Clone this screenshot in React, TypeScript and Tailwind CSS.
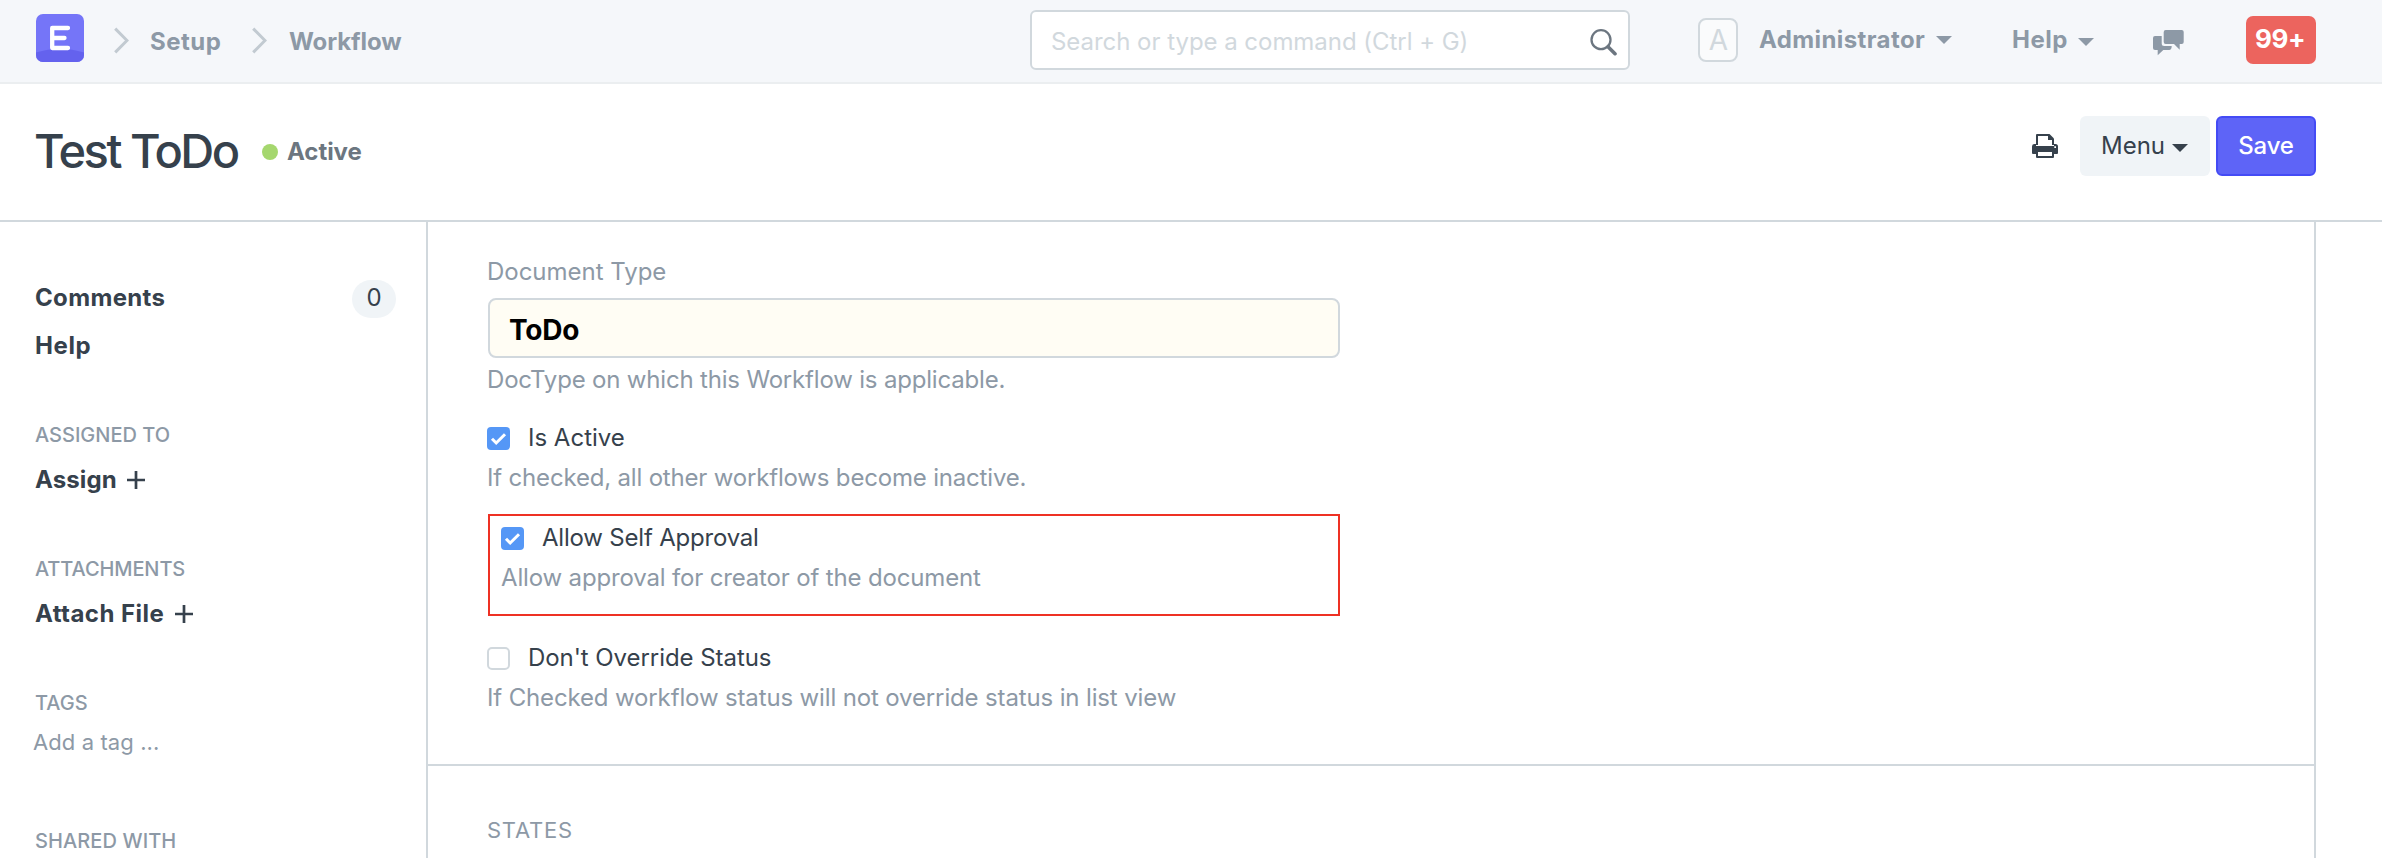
import type { ReactNode } from "react";

function Chevron({ className }: { className: string }) {
  return (
    <svg className={`mt-[27px] h-[27px] w-[15px] shrink-0 ${className}`} viewBox="0 0 15 27" fill="none">
      <path d="M1.200 1.600 13 13.500 1.200 25.400" stroke="#c2cad1" strokeWidth="3" />
    </svg>
  );
}

function Caret({ className }: { className: string }) {
  return (
    <svg className={`h-2 w-4 shrink-0 ${className}`} viewBox="0 0 16 8" fill="currentColor">
      <path d="M0 0h16L8 8z" />
    </svg>
  );
}

function Logo() {
  return (
    <svg className="mt-[14px] ml-9 h-12 w-12 shrink-0 rounded-[7px]" viewBox="0 0 48 48" fill="none">
      <rect width="48" height="48" fill="#7575f8" />
      <path d="M0 38.600Q24 31 48 38.600V48H0z" fill="#6462ee" />
      <path d="M32 14H16.200V34H32M17 24h11.500" stroke="#fff" strokeWidth="4.300" strokeLinecap="round" strokeLinejoin="round" />
    </svg>
  );
}

function SearchIcon() {
  return (
    <svg className="mt-4 mr-[10px] h-7 w-7" viewBox="0 0 28 28" fill="none" stroke="#6c7680">
      <circle cx="11" cy="11.700" r="9.500" strokeWidth="2.300" />
      <path d="M18 18.700l7 7" strokeWidth="3.600" strokeLinecap="round" />
    </svg>
  );
}

function ChatIcon() {
  return (
    <svg className="mt-[30px] ml-[59px] h-[26px] w-[31px] shrink-0" viewBox="0 0 31 26" fill="#8d99a6">
      <path d="M12.700 0h16a2 2 0 0 1 2 2v10a2 2 0 0 1-2 2h-2v5.700L21 14h-8.300a2 2 0 0 1-2-2V2a2 2 0 0 1 2-2z" />
      <path d="M2 6h6.700v7.500a2.500 2.500 0 0 0 2.500 2.500h7.500c0 2.700-.9 4-2.500 4h-5.900l-5.600 5.300V20H2a2 2 0 0 1-2-2V8a2 2 0 0 1 2-2z" />
    </svg>
  );
}

function PrintIcon() {
  return (
    <svg className="mt-[50px] h-6 w-[26px] shrink-0" viewBox="0 0 26 24">
      <path d="M4 1a1 1 0 0 1 1-1h12.500L22 4.500V11H4z" fill="#36414c" />
      <path d="M6 2h10v4h4v7H6z" fill="#fff" />
      <path d="M0 12.500A2.500 2.500 0 0 1 2.500 10H4v2h18v-2h1.500a2.500 2.500 0 0 1 2.500 2.500V19a1 1 0 0 1-1 1h-3v3a1 1 0 0 1-1 1H5a1 1 0 0 1-1-1v-3H1a1 1 0 0 1-1-1z" fill="#36414c" />
      <path d="M6 18h14v4H6zM22.300 12.200h1.700v1.700h-1.700z" fill="#fff" />
    </svg>
  );
}

function Plus({ className }: { className: string }) {
  return (
    <svg className={`h-[18px] w-[18px] ${className}`} viewBox="0 0 18 18" stroke="#36414c" strokeWidth="2.700">
      <path d="M0 9h18M9 0v18" />
    </svg>
  );
}

function Checkbox({ checked }: { checked: boolean }) {
  return checked ? (
    <svg className="mt-1 h-[23px] w-[23px] shrink-0" viewBox="0 0 23 23" fill="none">
      <rect width="23" height="23" rx="4" fill="#5597f6" />
      <path d="M5 11.800l4.200 4.200L18 7.200" stroke="#fff" strokeWidth="3" />
    </svg>
  ) : (
    <span className="mt-1 block h-[23px] w-[23px] shrink-0 rounded-[5px] border-[2.500px] border-[#d1d8dd] bg-white" />
  );
}

function SideHeading({ className, children }: { className: string; children: ReactNode }) {
  return <h6 className={`text-[20px] leading-6 font-medium text-[#8d99a6] ${className}`}>{children}</h6>;
}

function Hint({ className, children }: { className: string; children: ReactNode }) {
  return <p className={`leading-[29px] text-[#8d99a6] ${className}`}>{children}</p>;
}

function Navbar() {
  return (
    <header className="flex h-[84px] items-start border-b-2 border-[#ebeef0] bg-[#f5f7fa] font-bold text-[#8d99a6]">
      <div className="flex w-[1030px] shrink-0 items-start">
        <Logo />
        <Chevron className="ml-[30px]" />
        <span className="mt-[27px] ml-[21px] w-[72px] tracking-[0.5px]">Setup</span>
        <Chevron className="ml-[30px]" />
        <span className="mt-[27px] ml-[22px] tracking-[-0.1px]">Workflow</span>
      </div>
      <div className="mt-[10px] flex h-[60px] w-[600px] shrink-0 items-start justify-between rounded-[6px] border-2 border-[#d1d8dd] bg-white font-normal text-[#d1d8dd]">
        <span className="mt-[15px] ml-[19px] tracking-[-0.04px]">Search or type a command (Ctrl + G)</span>
        <SearchIcon />
      </div>
      <span className="mt-[18px] ml-[68px] flex h-11 w-10 shrink-0 justify-center rounded-[8px] border-2 border-[#d1d8dd] bg-[#fafbfc] pt-[3px] pl-px text-[28px] leading-[34px] font-normal text-[#d1d8dd]">
        A
      </span>
      <span className="mt-[25px] ml-[21px] w-[168px] shrink-0 tracking-[0.4px]">Administrator</span>
      <Caret className="mt-9 ml-[9px]" />
      <span className="mt-[25px] ml-[60px] w-14 shrink-0 tracking-[0.5px]">Help</span>
      <Caret className="mt-[38px] ml-[10px]" />
      <ChatIcon />
      <span className="mt-4 ml-[62px] h-12 w-[70px] shrink-0 rounded-[7px] bg-[#ec645e] pt-[7px] pl-[9px] text-[26px] leading-[31px] tracking-[-0.35px] text-white">
        99+
      </span>
    </header>
  );
}

function TitleBar() {
  return (
    <div className="flex h-[138px] items-start border-b-2 border-[#d1d8dd]">
      <div className="flex w-[2032px] shrink-0 items-start">
        <h1 className="mt-[38px] ml-[34px] w-[228px] text-[47px] leading-[57px] font-medium tracking-[-2.5px]">Test ToDo</h1>
        <span className="mt-[60px] h-4 w-4 rounded-full bg-[#a5d76e]" />
        <span className="mt-[53px] ml-[9px] font-bold tracking-[-0.05px] text-[#6c7680]">Active</span>
      </div>
      <PrintIcon />
      <button className="mt-8 ml-[22px] flex h-[60px] w-[130px] shrink-0 items-start rounded-[6px] bg-[#f0f4f7] pl-[21px]">
        <span className="mt-[15px] w-[71px] text-left">Menu</span>
        <Caret className="mt-7" />
      </button>
      <button className="mt-8 ml-[6px] h-[60px] w-[100px] shrink-0 rounded-[6px] border-2 border-[#444bf5] bg-[#5e64f7] pb-px font-medium tracking-[-0.2px] text-white">
        Save
      </button>
    </div>
  );
}

function Sidebar() {
  return (
    <aside className="w-[426px] shrink-0 pt-[58px] pr-[30px] pl-[35px]">
      <div className="flex h-[38px] items-start justify-between">
        <span className="mt-[3px] font-bold tracking-[0.35px]">Comments</span>
        <span className="h-[38px] w-11 rounded-[19px] bg-[#f0f4f7] pt-[3px] text-center">0</span>
      </div>
      <div className="mt-[13px] font-bold tracking-[0.6px]">Help</div>
      <SideHeading className="mt-[63px] tracking-[0px]">ASSIGNED TO</SideHeading>
      <div className="mt-[18px] flex items-start">
        <span className="w-[92px] font-bold tracking-[0.1px]">Assign</span>
        <Plus className="mt-[6px]" />
      </div>
      <SideHeading className="mt-[63px] tracking-[-0.1px]">ATTACHMENTS</SideHeading>
      <div className="mt-[18px] flex items-start">
        <span className="w-[140px] font-bold tracking-[0.45px]">Attach File</span>
        <Plus className="mt-[6px]" />
      </div>
      <SideHeading className="mt-[63px] tracking-[0px]">TAGS</SideHeading>
      <div className="mt-[14px] -ml-[2px] text-[22px] leading-[26px] tracking-[0.1px] text-[#8d99a6]">Add a tag ...</div>
      <SideHeading className="mt-[74px] tracking-[0.1px]">SHARED WITH</SideHeading>
    </aside>
  );
}

function Form() {
  return (
    <main className="w-[1890px] shrink-0 border-x-2 border-[#d1d8dd]">
      <section className="h-[544px] border-b-2 border-[#d1d8dd] pt-[35px] pl-[59px]">
        <label className="block tracking-[-0.02px] text-[#8d99a6]">Document Type</label>
        <div className="mt-3 ml-px h-[60px] w-[852px] rounded-[8px] border-2 border-[#d1d8dd] bg-[#fffdf4] pt-[13px] pl-[19px] text-[28px] leading-[34px] font-bold tracking-[-0.2px] text-black">
          ToDo
        </div>
        <Hint className="mt-[7px] tracking-[-0.18px]">DocType on which this Workflow is applicable.</Hint>

        <div className="mt-[29px] flex items-start">
          <Checkbox checked />
          <span className="ml-[18px]">Is Active</span>
        </div>
        <Hint className="mt-[11px] tracking-[-0.18px]">If checked, all other workflows become inactive.</Hint>

        <div className="mt-[22px] ml-px h-[102px] w-[852px] border-2 border-[#ee3124] pt-[7px] pl-[11px]">
          <div className="flex items-start">
            <Checkbox checked />
            <span className="ml-[18px] tracking-[-0.2px]">Allow Self Approval</span>
          </div>
          <Hint className="mt-[11px] tracking-[-0.16px]">Allow approval for creator of the document</Hint>
        </div>

        <div className="mt-[27px] flex items-start">
          <Checkbox checked={false} />
          <span className="ml-[18px] tracking-[-0.06px]">Don't Override Status</span>
        </div>
        <Hint className="mt-[11px] tracking-[-0.14px]">
          If Checked workflow status will not override status in list view
        </Hint>
      </section>
      <section className="pt-[51px] pl-[59px]">
        <h6 className="text-[22px] leading-[26px] tracking-[0.75px] text-[#8d99a6]">STATES</h6>
      </section>
    </main>
  );
}

export default function App() {
  return (
    <div className="h-[858px] w-[2382px] overflow-hidden bg-white font-['Inter','Liberation_Sans',sans-serif] text-[24px] leading-[29px] font-normal whitespace-nowrap text-[#36414c]">
      <Navbar />
      <TitleBar />
      <div className="flex h-[636px]">
        <Sidebar />
        <Form />
      </div>
    </div>
  );
}
